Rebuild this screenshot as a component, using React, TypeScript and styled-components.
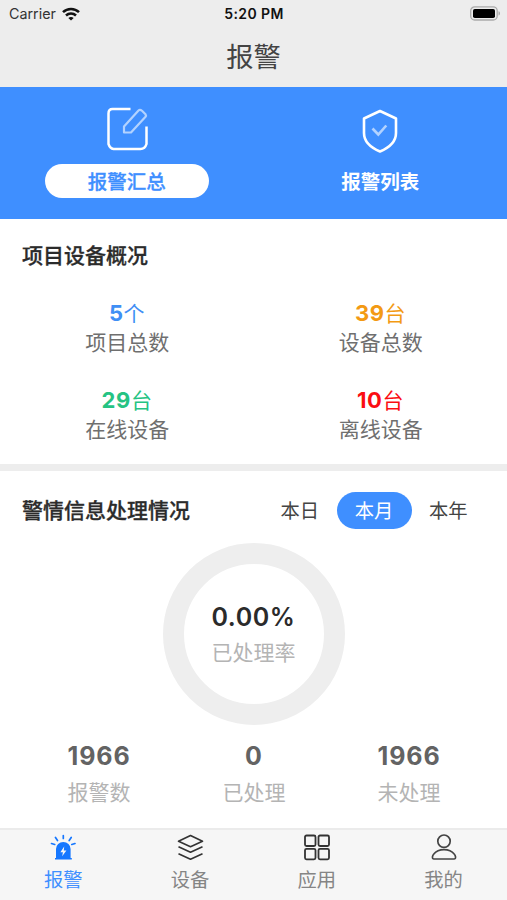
import React from "react";
import styled, { createGlobalStyle } from "styled-components";

const GlobalStyle = createGlobalStyle`
  * { box-sizing: border-box; }
  body {
    margin: 0;
    background: #fff;
    font-family: Inter, "Noto Sans CJK SC", sans-serif;
    color: #333;
  }
`;

const Screen = styled.div`
  display: flex;
  flex-direction: column;
  width: 507px;
  height: 900px;
  overflow: hidden;
  background: #fff;
`;

const Header = styled.header`
  height: 87px;
  background: #ededed;
`;

const StatusBar = styled.div`
  display: grid;
  grid-template-columns: 1fr auto 1fr;
  align-items: center;
  height: 27px;
  padding: 0 6px 0 9px;
  color: #111;
`;

const Carrier = styled.div`
  display: flex;
  align-items: center;
  gap: 6px;
  font-size: 14.3px;
  color: #333;
`;

const Clock = styled.div`
  padding-right: 2px;
  font-size: 14px;
  font-weight: 600;
  letter-spacing: 0.4px;
`;

const BatterySlot = styled.div`
  display: flex;
  justify-content: flex-end;
`;

const Title = styled.h1`
  margin: 0;
  font-size: 27.3px;
  font-weight: 400;
  line-height: 62px;
  text-align: center;
  color: #444;
`;

const Banner = styled.nav`
  display: grid;
  grid-template-columns: 1fr 1fr;
  height: 132px;
  padding-top: 19px;
  background: #3f8fff;
`;

const BannerItem = styled.div`
  display: flex;
  flex-direction: column;
  align-items: center;
  gap: 8px;
`;

const BannerLabel = styled.div<{ $active?: boolean }>`
  width: 164px;
  height: 34px;
  border-radius: 17px;
  font-size: 19.5px;
  font-weight: ${(p) => (p.$active ? 500 : 700)};
  line-height: 36px;
  text-align: center;
  color: ${(p) => (p.$active ? "#3f8fff" : "#fff")};
  background: ${(p) => (p.$active ? "#fff" : "transparent")};
  -webkit-text-stroke: ${(p) => (p.$active ? "0.3px #3f8fff" : "0")};
`;

const Overview = styled.section`
  height: 252px;
  padding-top: 21px;
  border-bottom: 7px solid #ededed;
`;

const SectionTitle = styled.h2`
  margin: 0;
  padding-left: 22px;
  font-size: 21px;
  font-weight: 500;
  line-height: 32px;
  color: #2b2b2b;
  -webkit-text-stroke: 0.3px #2b2b2b;
`;

const OverviewGrid = styled.div`
  display: grid;
  grid-template-columns: 1fr 1fr;
  grid-auto-rows: 87px;
  padding-top: 26px;
`;

const OverviewCell = styled.div`
  text-align: center;
`;

const Count = styled.div<{ $color: string }>`
  font-size: 22px;
  font-weight: 700;
  line-height: 30px;
  letter-spacing: 0.6px;
  color: ${(p) => p.$color};
`;

const Unit = styled.span`
  font-size: 21px;
  font-weight: 400;
  letter-spacing: 0;
`;

const CellLabel = styled.div`
  padding-left: 1px;
  font-size: 21px;
  line-height: 27px;
  color: #6f6f6f;
`;

const Handling = styled.section`
  height: 357px;
  padding-top: 20px;
`;

const HandlingHead = styled.div`
  display: flex;
  align-items: center;
  justify-content: space-between;
  height: 39px;
  padding-right: 22px;
`;

const Periods = styled.div`
  display: flex;
`;

const Period = styled.div<{ $active?: boolean }>`
  width: ${(p) => (p.$active ? "75px" : "73.5px")};
  height: 37px;
  border-radius: 19px;
  font-size: 19.3px;
  line-height: 39px;
  text-align: center;
  color: ${(p) => (p.$active ? "#fff" : "#444")};
  background: ${(p) => (p.$active ? "#3f8fff" : "transparent")};
`;

const Ring = styled.div`
  display: flex;
  flex-direction: column;
  align-items: center;
  width: 182px;
  height: 182px;
  margin: 13px auto 0;
  padding-top: 37px;
  border: 21px solid #eee;
  border-radius: 50%;
`;

const Percent = styled.div`
  margin-bottom: 4px;
  font-size: 25px;
  font-weight: 600;
  line-height: 32px;
  letter-spacing: 0.6px;
  color: #2b2b2b;
`;

const MutedLabel = styled.div`
  font-size: 21px;
  line-height: 32px;
  white-space: nowrap;
  color: #b4b4b4;
`;

const Totals = styled.div`
  display: grid;
  grid-template-columns: repeat(3, 155px);
  justify-content: center;
  padding: 14px 0 0 1px;
  text-align: center;
`;

const TotalValue = styled.div`
  margin-bottom: 4px;
  font-size: 25px;
  font-weight: 700;
  line-height: 34px;
  letter-spacing: 0.9px;
  color: #636363;
`;

const TabBar = styled.nav`
  display: grid;
  grid-template-columns: repeat(4, 1fr);
  height: 72px;
  padding-top: 4px;
  border-top: 2px solid #ebebeb;
  background: #f6f6f6;
`;

const Tab = styled.div<{ $active?: boolean }>`
  display: flex;
  flex-direction: column;
  align-items: center;
  font-size: 19.3px;
  line-height: 36px;
  color: ${(p) => (p.$active ? "#3f8fff" : "#858585")};

  svg { display: block; }
`;

const WifiIcon = () => (
  <svg width="18" height="14" viewBox="0 0 18 14" fill="none" stroke="#111" strokeWidth="2.5">
    <path d="M1 5.2C5.4.8 12.6.8 17 5.2" />
    <path d="M4 8.5c2.8-2.7 7.2-2.7 10 0" />
    <path d="M9 13.6 6.3 11q2.7-2.2 5.4 0Z" fill="#111" stroke="none" />
  </svg>
);

const BatteryIcon = () => (
  <svg width="31" height="15" viewBox="0 0 31 15">
    <rect x=".7" y=".8" width="26.5" height="13.2" rx="4" fill="#ededed" stroke="#aaa" strokeWidth="1.3" />
    <rect x="3" y="3" width="22" height="9" rx="1.8" fill="#000" />
    <path d="M28.5 5.2c2 .7 2 3.6 0 4.3Z" fill="#aaa" />
  </svg>
);

const EditIcon = () => (
  <svg width="42" height="50" viewBox="0 0 42 50" fill="none" stroke="#fff">
    <path d="M24.500 3H6.500Q2.500 3 2.500 7.500v30.500q1.500 4.500 5 5h27q4.500 0 6-5V20.500" strokeWidth="2.500" strokeLinejoin="round" />
    <path d="M18 20.500 32.500 4.500Q34 3 36 4.800L39.500 8.200Q40.500 9.500 39.300 11L25 26.500H18Z" strokeWidth="2.200" strokeLinejoin="round" opacity=".6" />
  </svg>
);

const ShieldIcon = () => (
  <svg width="36" height="50" viewBox="0 0 36 50" fill="none" stroke="#fff">
    <path d="M18 5 34 12.500V27c0 8-6.500 14.500-16 18.500C8.500 41.500 2 35 2 27V12.500Z" strokeWidth="2.600" strokeLinejoin="round" />
    <path d="m10.500 22.500 5.800 6 8-9" strokeWidth="2.600" opacity=".6" />
  </svg>
);

const SirenIcon = () => (
  <svg width="26" height="28" viewBox="0 0 26 28" fill="none" stroke="#1677ff" strokeWidth="1.700" strokeLinecap="round">
    <path d="M13.300 1.500v3M5.500 3.500l2 3M21.200 3.500l-2 3M1.500 9.500l3.200 1M25 9.500l-3.200 1" />
    <path d="M6 24V15a7.300 7 0 0 1 14.600 0v9h1.200v1.500H5V24Z" fill="#1677ff" stroke="none" />
    <path d="M14.200 12.500 10.400 18.300h2.500l-.7 4 4.200-5.700h-2.600Z" fill="#f6f6f6" stroke="none" />
  </svg>
);

const LayersIcon = () => (
  <svg width="28" height="28" viewBox="0 0 28 28" fill="none" stroke="#333" strokeWidth="1.600" strokeLinejoin="round">
    <path d="M14.500 1.500 26.500 7.300 14.500 12.800 2.500 7.300Z" />
    <path d="m2.500 12.800 12 5.500 12-5.500M2.500 19.800 14.500 25.200l12-5.400" />
  </svg>
);

const GridIcon = () => (
  <svg width="28" height="28" viewBox="0 0 28 28" fill="none" stroke="#333" strokeWidth="1.800">
    <rect x="2" y="1.500" width="10.500" height="10.500" rx="1.500" />
    <rect x="15.500" y="1.500" width="10.500" height="10.500" rx="1.500" />
    <rect x="2" y="14.800" width="10.500" height="10.500" rx="1.500" />
    <rect x="15.500" y="14.800" width="10.500" height="10.500" rx="1.500" />
  </svg>
);

const PersonIcon = () => (
  <svg width="28" height="28" viewBox="0 0 28 28" fill="none" stroke="#444" strokeWidth="1.700" strokeLinejoin="round">
    <circle cx="14" cy="7.200" r="6.200" />
    <path d="M3.800 25c-2.200-.3-1.500-3.200 0-5 4.600-5.800 15.800-5.800 20.400 0 1.500 1.800 2.200 4.700 0 5Z" />
  </svg>
);

const overview = [
  { value: "5", unit: "个", label: "项目总数", color: "#3f8ff5" },
  { value: "39", unit: "台", label: "设备总数", color: "#f39a13" },
  { value: "29", unit: "台", label: "在线设备", color: "#25c383" },
  { value: "10", unit: "台", label: "离线设备", color: "#fb0d12" },
];

const totals = [
  { value: "1966", label: "报警数" },
  { value: "0", label: "已处理" },
  { value: "1966", label: "未处理" },
];

export default function App() {
  return (
    <>
      <GlobalStyle />
      <Screen>
        <Header>
          <StatusBar>
            <Carrier>Carrier <WifiIcon /></Carrier>
            <Clock>5:20 PM</Clock>
            <BatterySlot><BatteryIcon /></BatterySlot>
          </StatusBar>
          <Title>报警</Title>
        </Header>
        <Banner>
          <BannerItem>
            <EditIcon />
            <BannerLabel $active>报警汇总</BannerLabel>
          </BannerItem>
          <BannerItem>
            <ShieldIcon />
            <BannerLabel>报警列表</BannerLabel>
          </BannerItem>
        </Banner>
        <Overview>
          <SectionTitle>项目设备概况</SectionTitle>
          <OverviewGrid>
            {overview.map((item) => (
              <OverviewCell key={item.label}>
                <Count $color={item.color}>{item.value}<Unit>{item.unit}</Unit></Count>
                <CellLabel>{item.label}</CellLabel>
              </OverviewCell>
            ))}
          </OverviewGrid>
        </Overview>
        <Handling>
          <HandlingHead>
            <SectionTitle>警情信息处理情况</SectionTitle>
            <Periods>
              <Period>本日</Period>
              <Period $active>本月</Period>
              <Period>本年</Period>
            </Periods>
          </HandlingHead>
          <Ring>
            <Percent>0.00%</Percent>
            <MutedLabel>已处理率</MutedLabel>
          </Ring>
          <Totals>
            {totals.map((item) => (
              <div key={item.label}>
                <TotalValue>{item.value}</TotalValue>
                <MutedLabel>{item.label}</MutedLabel>
              </div>
            ))}
          </Totals>
        </Handling>
        <TabBar>
          <Tab $active><SirenIcon />报警</Tab>
          <Tab><LayersIcon />设备</Tab>
          <Tab><GridIcon />应用</Tab>
          <Tab><PersonIcon />我的</Tab>
        </TabBar>
      </Screen>
    </>
  );
}
